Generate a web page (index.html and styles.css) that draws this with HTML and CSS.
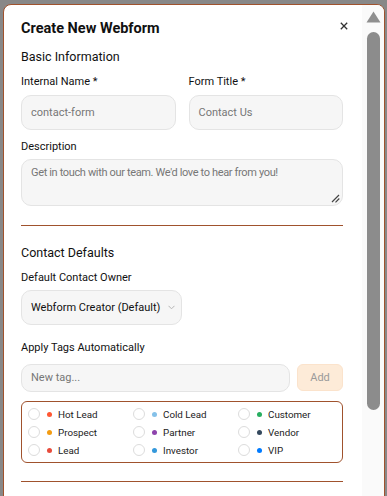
FILE: index.html
```html
<!DOCTYPE html>
<html>
<head>
<meta charset="utf-8">
<link rel="stylesheet" href="styles.css">
</head>
<body>
<div class="modal">
  <div class="content">
    <div class="header">
      <h2 class="title">Create New Webform</h2>
      <svg class="close" width="8" height="8" viewBox="0 0 8 8"><path d="M0.8 0.8 L7.2 7.2 M7.2 0.8 L0.8 7.2" stroke="#333" stroke-width="1.3" fill="none"/></svg>
    </div>
    <h3 class="section first">Basic Information</h3>
    <div class="row2">
      <div class="field">
        <label class="label">Internal Name *</label>
        <div class="input">contact-form</div>
      </div>
      <div class="field">
        <label class="label">Form Title *</label>
        <div class="input">Contact Us</div>
      </div>
    </div>
    <div class="field desc">
      <label class="label">Description</label>
      <div class="textarea">Get in touch with our team. We'd love to hear from you!
        <svg class="grip" width="9" height="9" viewBox="0 0 9 9"><path d="M1 8 L8 1 M4.5 8.3 L8.3 4.5" stroke="#444" stroke-width="1.2" fill="none"/></svg>
      </div>
    </div>
    <hr class="divider">
    <h3 class="section second">Contact Defaults</h3>
    <div class="field owner">
      <label class="label">Default Contact Owner</label>
      <div class="select"><span>Webform Creator (Default)</span>
        <svg class="chev" width="7" height="5" viewBox="0 0 7 5"><path d="M0.5 0.8 L3.5 3.8 L6.5 0.8" stroke="#b5b5b5" stroke-width="1" fill="none"/></svg>
      </div>
    </div>
    <div class="field tagsfield">
      <label class="label">Apply Tags Automatically</label>
      <div class="tagrow">
        <div class="input taginput">New tag...</div>
        <div class="addbtn">Add</div>
      </div>
    </div>
    <div class="tags">
      <div class="tag"><span class="radio"></span><span class="dot" style="background:#ff5733"></span>Hot Lead</div>
      <div class="tag"><span class="radio"></span><span class="dot" style="background:#85c1e9"></span>Cold Lead</div>
      <div class="tag"><span class="radio"></span><span class="dot" style="background:#27ae60"></span>Customer</div>
      <div class="tag"><span class="radio"></span><span class="dot" style="background:#f39c12"></span>Prospect</div>
      <div class="tag"><span class="radio"></span><span class="dot" style="background:#8e44ad"></span>Partner</div>
      <div class="tag"><span class="radio"></span><span class="dot" style="background:#34495e"></span>Vendor</div>
      <div class="tag"><span class="radio"></span><span class="dot" style="background:#e74c3c"></span>Lead</div>
      <div class="tag"><span class="radio"></span><span class="dot" style="background:#3498db"></span>Investor</div>
      <div class="tag"><span class="radio"></span><span class="dot" style="background:#007bff"></span>VIP</div>
    </div>
    <hr class="divider last">
  </div>
  <div class="scrollbar">
    <svg class="arrow" width="15" height="12" viewBox="0 0 15 12"><path d="M7.5 0.5 L14.5 11.5 L0.5 11.5 Z" fill="#8f8f8f"/></svg>
    <div class="thumb"></div>
  </div>
</div>
</body>
</html>
```

FILE: styles.css
```css
html, body {
  margin: 0;
  padding: 0;
  background: #888;
  overflow: hidden;
  height: 100%;
}
body {
  font-family: Roboto, Inter, "Noto Sans", sans-serif;
  color: #111;
}
.modal {
  position: relative;
  display: flex;
  margin: 4px 0 0 3px;
  width: 382px;
  height: 520px;
  box-sizing: border-box;
  background: #fff;
  border: 1px solid #a0522d;
  border-radius: 8px;
  overflow: hidden;
}
.content {
  width: 322px;
  padding: 14px 0 0 17px;
}
.header {
  display: flex;
  justify-content: space-between;
  align-items: center;
  height: 20px;
}
.title {
  margin: 0;
  font-size: 14.5px;
  font-weight: 700;
  line-height: 20px;
}
.close {
  margin-right: -5px;
  margin-top: -6px;
}
.section {
  margin: 9px 0 0 0;
  font-size: 12.5px;
  font-weight: 400;
  line-height: 18px;
}
.row2 {
  display: grid;
  grid-template-columns: 1fr 1fr;
  column-gap: 13px;
  margin-top: 9px;
}
.field {
  display: flex;
  flex-direction: column;
}
.label {
  font-size: 11px;
  line-height: 14px;
  margin-bottom: 6px;
}
.input, .textarea, .select {
  box-sizing: border-box;
  background: #f6f6f6;
  border: 1px solid #e4e4e4;
  border-radius: 10px;
  font-size: 11px;
  color: #777;
  padding: 0 9px;
}
.input {
  height: 35px;
  line-height: 33px;
}
.desc {
  margin-top: 10px;
}
.desc .label {
  margin-bottom: 5px;
}
.textarea {
  position: relative;
  height: 47px;
  padding-top: 6px;
  line-height: 14px;
  letter-spacing: -0.35px;
}
.grip {
  position: absolute;
  right: 2px;
  bottom: 2px;
}
.divider {
  margin: 19px 0 0 0;
  border: 0;
  border-top: 1px solid #a0522d;
}
.section.second {
  margin-top: 18px;
}
.owner {
  margin-top: 9px;
}
.owner .label {
  margin-bottom: 5px;
}
.select {
  width: 161px;
  height: 35px;
  color: #111;
  display: flex;
  justify-content: space-between;
  align-items: center;
  padding-right: 6px;
  white-space: nowrap;
}
.tagsfield {
  margin-top: 16px;
}
.tagsfield .label {
  margin-bottom: 9px;
}
.tagrow {
  display: flex;
  gap: 7px;
}
.taginput {
  flex: 1;
  height: 28px;
  line-height: 26px;
}
.addbtn {
  width: 46px;
  height: 27px;
  line-height: 25px;
  box-sizing: border-box;
  background: #fdebd8;
  border: 1px solid #fbe3cc;
  border-radius: 6px;
  text-align: center;
  font-size: 11px;
  color: #9a9a9a;
}
.tags {
  margin-top: 9px;
  box-sizing: border-box;
  border: 1px solid #a0522d;
  border-radius: 6px;
  padding: 3px 6px 3px 6px;
  display: grid;
  grid-template-columns: 105px 105px 105px;
}
.tag {
  display: flex;
  align-items: center;
  height: 18px;
  font-size: 9.8px;
  color: #222;
}
.radio {
  width: 12px;
  height: 12px;
  box-sizing: border-box;
  border: 1px solid #dcdcdc;
  border-radius: 50%;
  margin-right: 7px;
  background: #fff;
}
.dot {
  width: 5px;
  height: 5px;
  border-radius: 50%;
  margin-right: 6px;
}
.divider.last {
  margin-top: 18px;
}
.scrollbar {
  position: absolute;
  top: 0;
  right: 0;
  bottom: 0;
  width: 22px;
  background: #fafafa;
  display: flex;
  flex-direction: column;
  align-items: center;
}
.arrow {
  margin-top: 6px;
}
.thumb {
  margin-top: 9px;
  width: 13px;
  height: 378px;
  background: #8c8c8c;
  border-radius: 7px;
}
```
